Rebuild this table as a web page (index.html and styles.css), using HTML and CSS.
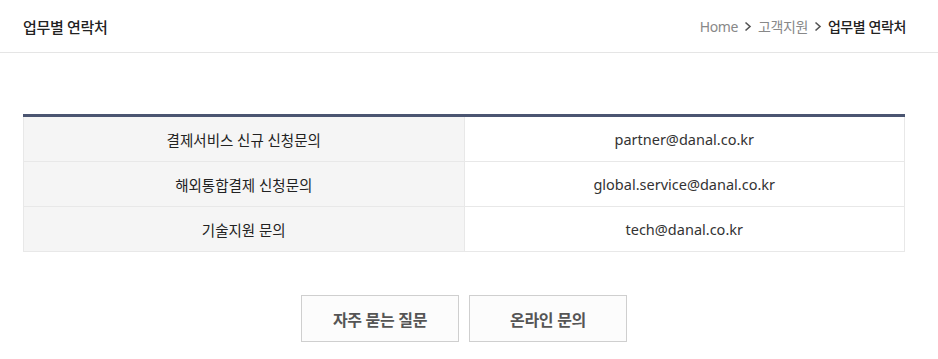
FILE: index.html
```html
<!DOCTYPE html>
<html lang="ko">
<head>
    <meta charset="utf-8">
    <link rel="stylesheet" href="styles.css">
</head>
<body>
    <div class="page-header">
        <h2 class="page-title">업무별 연락처</h2>
        <div class="breadcrumb">
            <span>Home</span>
            <svg class="sep" width="8" height="11" viewBox="0 0 8 11"><path d="M1.5 1.5 L6 5.5 L1.5 9.5" fill="none" stroke="#555" stroke-width="1.6"/></svg>
            <span>고객지원</span>
            <svg class="sep" width="8" height="11" viewBox="0 0 8 11"><path d="M1.5 1.5 L6 5.5 L1.5 9.5" fill="none" stroke="#555" stroke-width="1.6"/></svg>
            <span class="current">업무별 연락처</span>
        </div>
    </div>

    <div class="content">
        <table class="contact-table">
            <tr>
                <th>결제서비스 신규 신청문의</th>
                <td>partner@danal.co.kr</td>
            </tr>
            <tr>
                <th>해외통합결제 신청문의</th>
                <td>global.service@danal.co.kr</td>
            </tr>
            <tr>
                <th>기술지원 문의</th>
                <td>tech@danal.co.kr</td>
            </tr>
        </table>

        <div class="btn-area">
            <a class="btn" href="#">자주 묻는 질문</a>
            <a class="btn" href="#">온라인 문의</a>
        </div>
    </div>
</body>
</html>
```

FILE: styles.css
```css
body {
    margin: 0;
    padding: 0;
    font-family: "Noto Sans", "Noto Sans CJK KR", sans-serif;
    color: #333;
    background: #fff;
}

.page-header {
    height: 52px;
    border-bottom: 1px solid #e5e5e5;
    display: flex;
    align-items: center;
    justify-content: space-between;
    padding: 0 32px 0 23px;
}

.page-title {
    margin: 0;
    font-size: 15px;
    font-weight: 500;
    color: #222;
    letter-spacing: -0.3px;
}

.breadcrumb {
    display: flex;
    align-items: center;
    gap: 4px;
    font-size: 14px;
    color: #888;
    letter-spacing: -0.4px;
}

.breadcrumb .sep {
    margin: 1px 2px 0;
}

.breadcrumb .current {
    color: #222;
    font-weight: 500;
}

.content {
    padding: 61px 33px 0 23px;
}

.contact-table {
    width: 100%;
    border-collapse: collapse;
    border-top: 3px solid #4b5571;
    font-size: 14.5px;
}

.contact-table th,
.contact-table td {
    height: 44px;
    border: 1px solid #e8e8e8;
    border-top: 0;
    text-align: center;
    padding: 0;
    width: 50%;
}

.contact-table th {
    background: #f5f5f5;
    font-weight: 400;
    color: #222;
}

.contact-table td {
    color: #333;
}

.btn-area {
    display: flex;
    justify-content: center;
    gap: 10px;
    margin-top: 43px;
}

.btn {
    width: 156px;
    height: 45px;
    display: flex;
    align-items: center;
    justify-content: center;
    border: 1px solid #cfcfcf;
    background: #fcfcfc;
    color: #555;
    font-size: 16px;
    font-weight: 700;
    text-decoration: none;
    letter-spacing: -0.3px;
}
```
